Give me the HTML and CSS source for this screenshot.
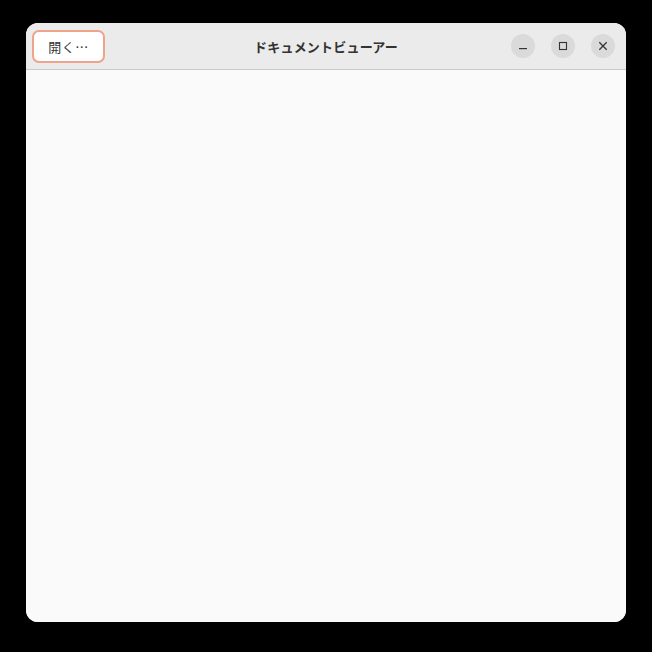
FILE: index.html
```html
<!DOCTYPE html>
<html lang="ja">
<head>
<meta charset="utf-8">
<link rel="stylesheet" href="styles.css">
</head>
<body>
<div class="window">
  <header class="headerbar">
    <div class="start">
      <button class="open-btn">開く…</button>
    </div>
    <div class="title">ドキュメントビューアー</div>
    <div class="controls">
      <span class="ctl">
        <svg width="10" height="10" viewBox="0 0 10 10"><rect x="1" y="7" width="8" height="1.2" fill="#333"/></svg>
      </span>
      <span class="ctl">
        <svg width="10" height="10" viewBox="0 0 10 10"><rect x="1.5" y="1.5" width="7" height="7" fill="none" stroke="#333" stroke-width="1.1"/></svg>
      </span>
      <span class="ctl">
        <svg width="10" height="10" viewBox="0 0 10 10"><path d="M1.3 1.3 L8.7 8.7 M8.7 1.3 L1.3 8.7" stroke="#333" stroke-width="1.3" fill="none"/></svg>
      </span>
    </div>
  </header>
  <main class="content"></main>
</div>
</body>
</html>
```

FILE: styles.css
```css
html, body {
  margin: 0;
  padding: 0;
  background: #000;
}
body {
  padding: 23px 26px 30px 26px;
  font-family: "Noto Sans CJK JP", "Noto Sans", sans-serif;
}
.window {
  width: 600px;
  height: 599px;
  border-radius: 12px;
  overflow: hidden;
  background: #fafafa;
  display: flex;
  flex-direction: column;
}
.headerbar {
  height: 46px;
  flex: none;
  background: #ebebeb;
  border-bottom: 1px solid #c8c8c8;
  display: flex;
  align-items: center;
  position: relative;
  padding: 0 11px 0 6px;
}
.start {
  flex: 1;
  display: flex;
  align-items: center;
}
.open-btn {
  width: 73px;
  height: 33px;
  margin-top: 0;
  box-sizing: border-box;
  border: 2px solid #eea38a;
  border-radius: 7px;
  background: #ffffff;
  color: #333;
  font-family: "Noto Sans CJK JP", "Noto Sans", sans-serif;
  font-size: 13px;
  padding: 0;
  letter-spacing: 0.5px;
}
.title {
  font-weight: bold;
  font-size: 13px;
  color: #333;
  letter-spacing: 0.2px;
  position: absolute;
  left: 0;
  right: 0;
  text-align: center;
  pointer-events: none;
}
.controls {
  flex: 1;
  display: flex;
  justify-content: flex-end;
  gap: 16px;
  align-items: center;
}
.ctl {
  width: 24px;
  height: 24px;
  border-radius: 50%;
  background: #dadada;
  display: flex;
  align-items: center;
  justify-content: center;
}
.content {
  flex: 1;
  background: #fafafa;
}
```
